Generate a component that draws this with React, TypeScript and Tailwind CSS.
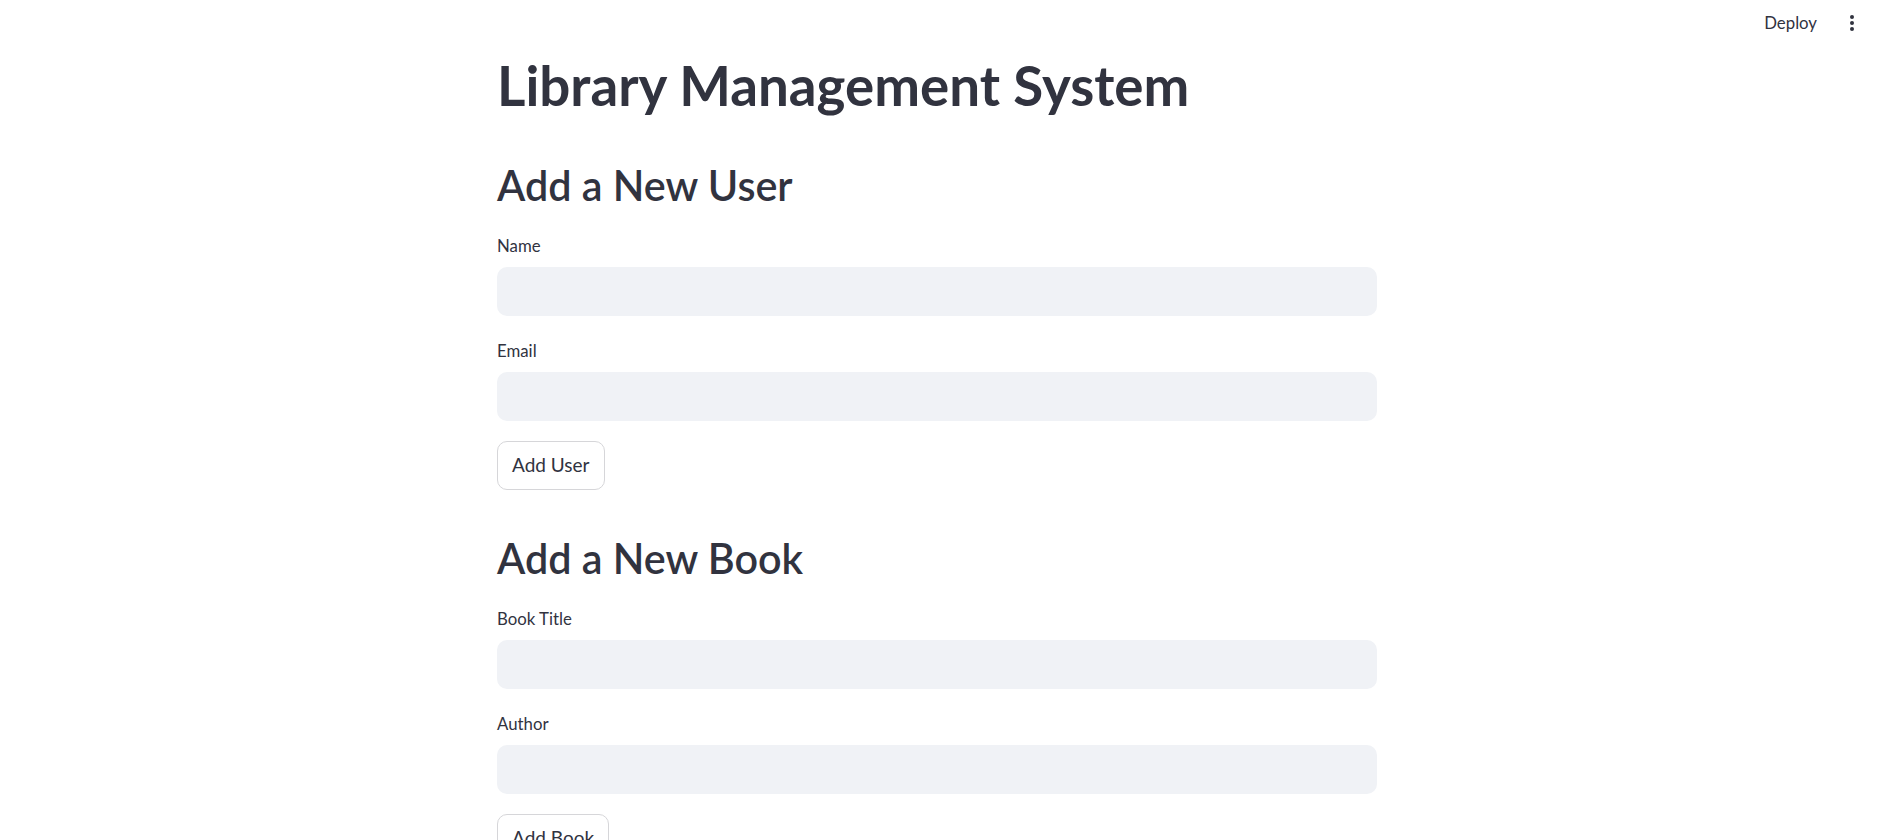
import { useState } from "react";

const font = { fontFamily: "Lato, 'Noto Sans', sans-serif" };

function Field({ label }: { label: string }) {
  const [value, setValue] = useState("");
  return (
    <div className="flex flex-col">
      <label className="h-[29px] mb-[7px] flex items-center text-[16.8px] text-[#31333f]">
        {label}
      </label>
      <input
        type="text"
        value={value}
        onChange={(e) => setValue(e.target.value)}
        className="h-[49px] w-full rounded-[10px] bg-[#f0f2f6] px-[14px] text-[19px] text-[#31333f] outline-none"
      />
    </div>
  );
}

function Section({ title, fields, button }: { title: string; fields: string[]; button: string }) {
  return (
    <section className="flex flex-col gap-[20px]">
      <h2 className="h-[52px] leading-[52px] text-[41.3px] font-semibold text-[#31333f]">
        {title}
      </h2>
      {fields.map((f) => (
        <Field key={f} label={f} />
      ))}
      <div>
        <button className="h-[49px] px-[14px] rounded-[10px] border border-[#d6d6d9] bg-white text-[19px] text-[#31333f]">
          {button}
        </button>
      </div>
    </section>
  );
}

export default function App() {
  return (
    <div className="min-h-screen bg-white" style={font}>
      <header className="h-[46px] flex items-center justify-end pr-[16px] gap-[25px] text-[#31333f]">
        <span className="text-[16.8px]">Deploy</span>
        <svg width="20" height="20" viewBox="0 0 20 20" fill="#31333f">
          <circle cx="10" cy="4" r="2" />
          <circle cx="10" cy="10" r="2" />
          <circle cx="10" cy="16" r="2" />
        </svg>
      </header>
      <main className="mx-auto w-[884px] pr-[4px] pt-[8px] flex flex-col gap-[42px]">
        <h1 className="h-[63px] leading-[63px] text-[54.7px] font-bold text-[#31333f]">
          Library Management System
        </h1>
        <Section title="Add a New User" fields={["Name", "Email"]} button="Add User" />
        <Section title="Add a New Book" fields={["Book Title", "Author"]} button="Add Book" />
      </main>
    </div>
  );
}
